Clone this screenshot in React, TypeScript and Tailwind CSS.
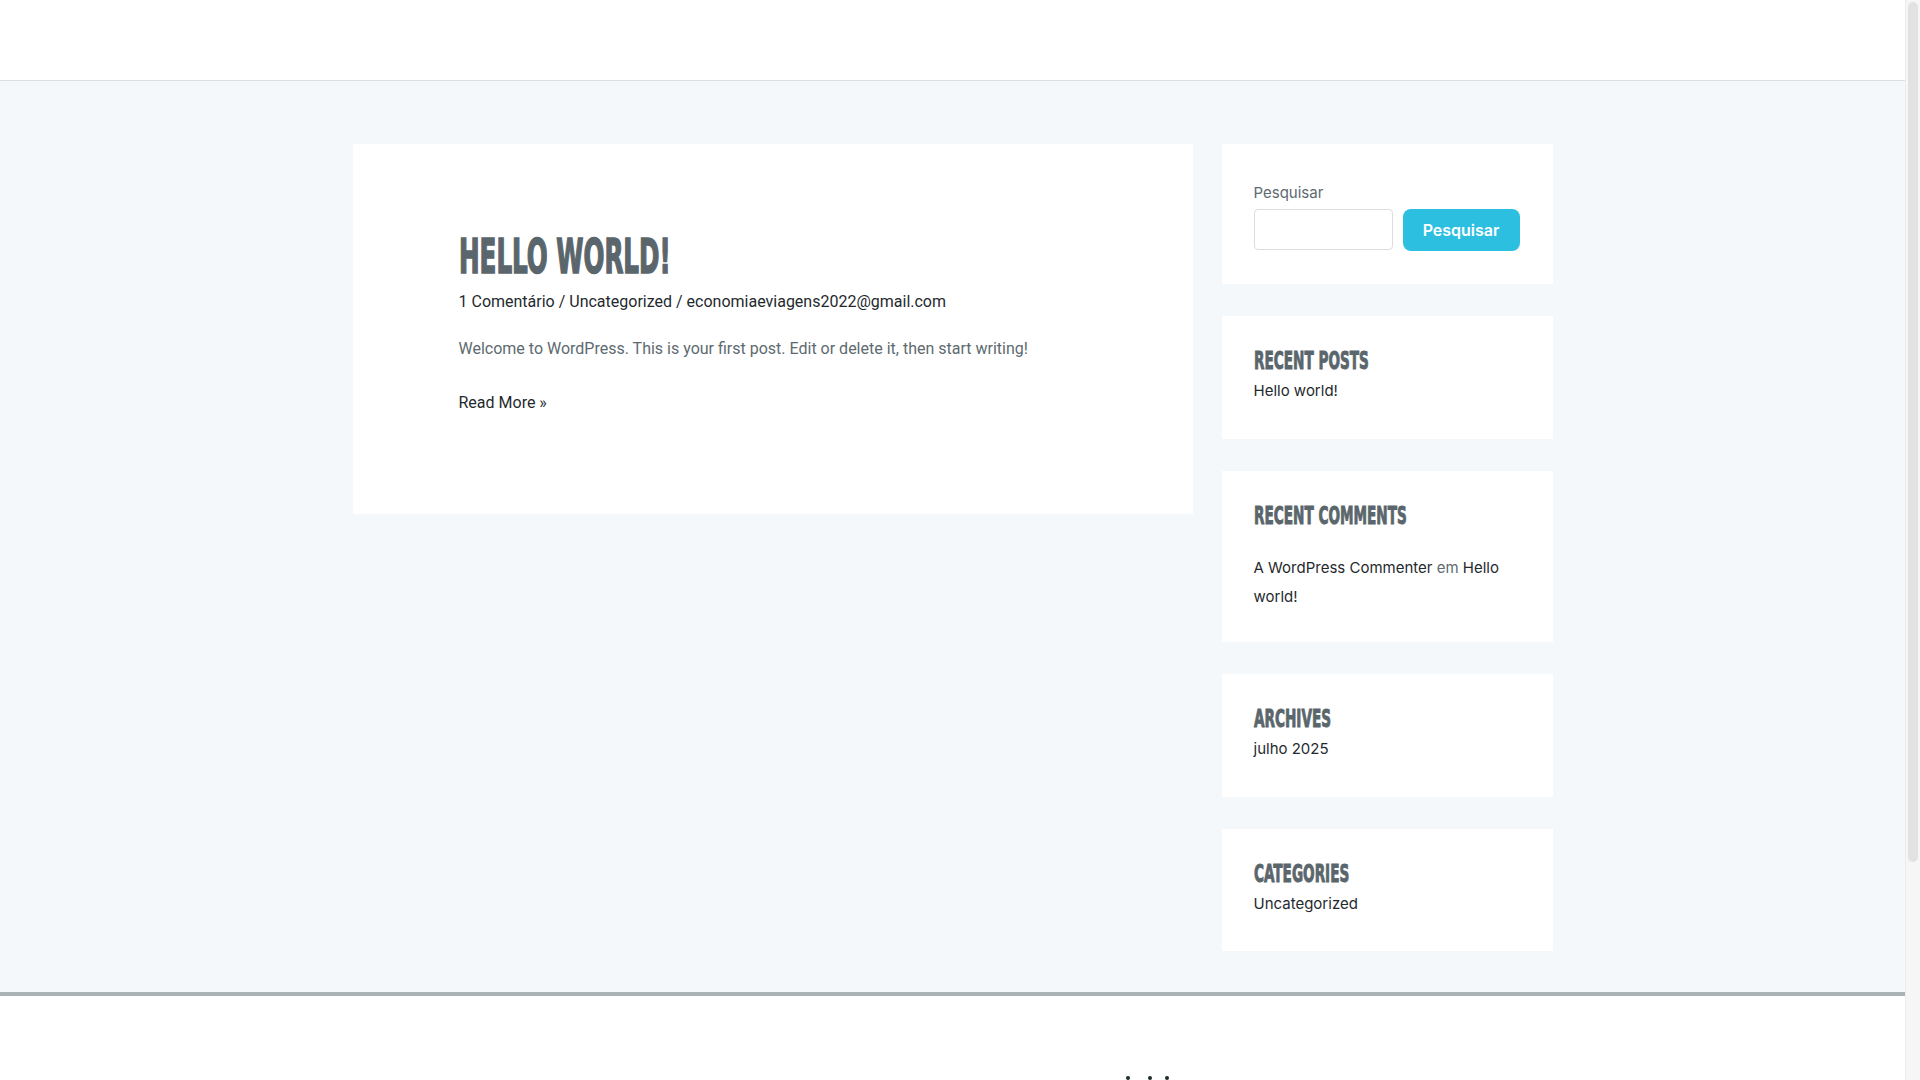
import React from 'react';

const anton = {
  fontFamily: '"DejaVu Sans Condensed", "DejaVu Sans", sans-serif',
};

function WidgetTitle({ children }: { children: React.ReactNode }) {
  return (
    <h2 className="h-[30px] text-[24px] leading-[30px] font-bold text-[#5a666b] whitespace-nowrap" style={anton}>
      <span className="inline-block origin-left scale-x-[0.63] [-webkit-text-stroke:0.9px_#5a666b]">{children}</span>
    </h2>
  );
}

export default function App() {
  return (
    <div className="flex min-h-screen">
      <div className="flex-1 min-w-0 bg-[#f4f8fb] font-['Roboto',sans-serif]">
        {/* header */}
        <header className="h-[81px] bg-white border-b border-[#dcdfe0]" />

        <div className="mx-auto w-[1200px] grid grid-cols-[840px_360px] pt-[63px] pb-[41px]">
          {/* main post */}
          <main>
            <article className="bg-white pl-[106px] pr-[106px] pt-[83px] pb-[99px]">
              <h1 className="h-[58px] text-[48px] leading-[58px] font-bold text-[#5a666b] whitespace-nowrap" style={anton}>
                <span className="inline-block origin-left scale-x-[0.57] [-webkit-text-stroke:1.6px_#5a666b]">HELLO WORLD!</span>
              </h1>
              <div className="mt-[5px] text-[16px] leading-[24px] text-[#1f2a2e]">
                <a href="#">1 Comentário</a> / <a href="#">Uncategorized</a> / <a href="#">economiaeviagens2022@gmail.com</a>
              </div>
              <p className="mt-[23px] text-[16px] leading-[24px] text-[#5d6a70]">
                Welcome to WordPress. This is your first post. Edit or delete it, then start writing!
              </p>
              <p className="mt-[30px] text-[16px] leading-[24px] text-[#1f2a2e]">
                <a href="#">Read More »</a>
              </p>
            </article>
          </main>

          {/* sidebar */}
          <aside className="pl-[29px] flex flex-col gap-[32px] font-['Inter',sans-serif]">
            <section className="bg-white px-[32px] pt-[37px] pb-[33px]">
              <label className="block text-[15px] leading-[24px] text-[#5d6a70]">Pesquisar</label>
              <div className="mt-[4px] flex gap-[10px]">
                <input className="w-[139px] h-[41px] border border-[#dddddd] rounded-[4px] bg-white" />
                <button className="w-[117px] h-[42px] rounded-[8px] bg-[#2cbfdf] text-white text-[16px] font-semibold">
                  Pesquisar
                </button>
              </div>
            </section>

            <section className="bg-white px-[32px] pt-[30px] pb-[36px]">
              <WidgetTitle>RECENT POSTS</WidgetTitle>
              <ul className="mt-[3px] text-[15px] leading-[24px] text-[#1f2a2e]">
                <li><a href="#">Hello world!</a></li>
              </ul>
            </section>

            <section className="bg-white px-[32px] pt-[30px] pb-[31px]">
              <WidgetTitle>RECENT COMMENTS</WidgetTitle>
              <p className="mt-[22px] text-[15px] leading-[29px] text-[#1f2a2e]">
                <a href="#">A WordPress Commenter</a> <span className="text-[#5d6a70]">em</span>{' '}
                <a href="#">Hello world!</a>
              </p>
            </section>

            <section className="bg-white px-[32px] pt-[30px] pb-[36px]">
              <WidgetTitle>ARCHIVES</WidgetTitle>
              <ul className="mt-[3px] text-[15px] leading-[24px] text-[#1f2a2e]">
                <li><a href="#">julho 2025</a></li>
              </ul>
            </section>

            <section className="bg-white px-[32px] pt-[30px] pb-[35px]">
              <WidgetTitle>CATEGORIES</WidgetTitle>
              <ul className="mt-[3px] text-[15px] leading-[24px] text-[#1f2a2e]">
                <li><a href="#">Uncategorized</a></li>
              </ul>
            </section>
          </aside>
        </div>

        {/* footer */}
        <footer className="bg-white border-t-4 border-[#a9b3b6] h-[140px]">
          <div className="pl-[1126px] pt-[80px] flex items-start">
            <span className="w-[4px] h-[4px] rounded-full bg-[#1f2a2e]" />
            <span className="ml-[18px] w-[4px] h-[4px] rounded-full bg-[#1f2a2e]" />
            <span className="ml-[13px] w-[4px] h-[4px] rounded-full bg-[#1f2a2e]" />
          </div>
        </footer>
      </div>

      {/* scrollbar track */}
      <div className="w-[15px] shrink-0 bg-[#f6f6f6] border-l border-[#ececec] px-[2px] pt-[2px]">
        <div className="h-[860px] rounded-full bg-[#e2e2e2]" />
      </div>
    </div>
  );
}
